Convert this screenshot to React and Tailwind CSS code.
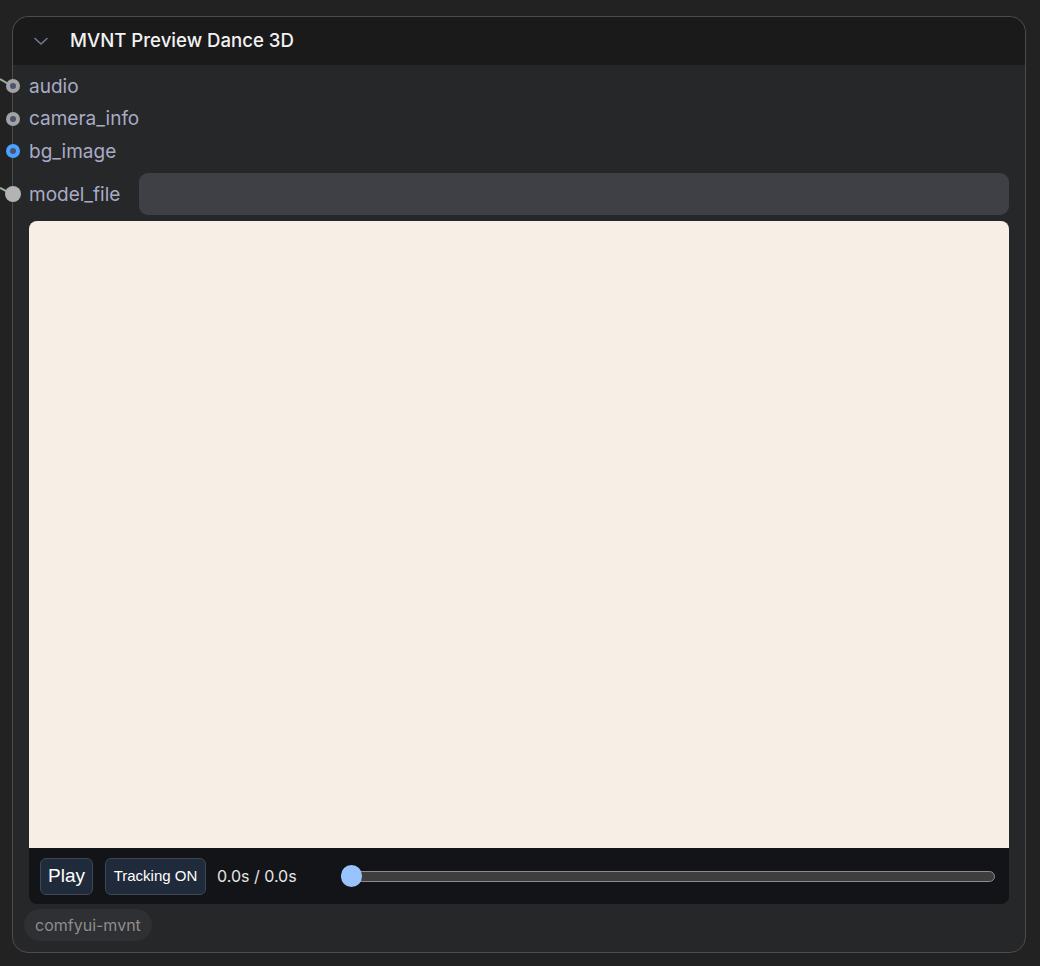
import React from "react";

function Slot({ label, h }) {
  return (
    <div className={`relative flex items-center ${h}`}>
      <span className="text-[19px] leading-none text-[#a9abc6]">{label}</span>
    </div>
  );
}

function Dot({ top, kind }) {
  if (kind === "solid") {
    return (
      <div
        className="absolute left-[-8px] h-[16px] w-[16px] rounded-full bg-[#b3b3b3]"
        style={{ top }}
      />
    );
  }
  const ring = kind === "blue" ? "bg-[#4aa3ff]" : "bg-[#a3a3a6]";
  return (
    <div
      className={`absolute left-[-7px] flex h-[14px] w-[14px] items-center justify-center rounded-full ${ring}`}
      style={{ top }}
    >
      <div className="h-[6px] w-[6px] rounded-full bg-[#4e5370]" />
    </div>
  );
}

export default function App() {
  return (
    <div
      className="min-h-[966px] w-[1040px] bg-[#222222] pt-[16px] pl-[12px]"
      style={{ fontFamily: "Inter, 'Noto Sans', sans-serif" }}
    >
      <div className="relative h-[937px] w-[1014px] rounded-[16px] border border-[#4b4c50] bg-[#262729]">
        {/* links */}
        <svg
          className="absolute left-[-13px] top-[-17px]"
          width="20"
          height="220"
          viewBox="0 0 20 220"
        >
          <path d="M0 79 L12 86" stroke="#9db09c" strokeWidth="2" fill="none" />
          <path d="M0 188 L12 194" stroke="#9db09c" strokeWidth="2" fill="none" />
        </svg>

        {/* header */}
        <div className="flex h-[48px] items-center rounded-t-[16px] bg-[#1a1a1a] pl-[20px]">
          <svg width="16" height="16" viewBox="0 0 16 16" className="mr-[21px]">
            <path
              d="M2 5.5 L8 11 L14 5.5"
              stroke="#737a98"
              strokeWidth="1.6"
              fill="none"
              strokeLinecap="round"
              strokeLinejoin="round"
            />
          </svg>
          <span className="text-[18.6px] font-medium text-[#f2f2f2]">MVNT Preview Dance 3D</span>
        </div>

        {/* dots */}
        <Dot top="62px" kind="ring" />
        <Dot top="95px" kind="ring" />
        <Dot top="127px" kind="blue" />
        <Dot top="169px" kind="solid" />

        <div className="px-[16px] pt-[5px]">
          <Slot label="audio" h="h-[32px]" />
          <Slot label="camera_info" h="h-[33px]" />
          <Slot label="bg_image" h="h-[32px]" />
          <div className="mt-[6px] flex h-[42px] items-center">
            <span className="w-[110px] text-[19px] leading-none text-[#a9abc6]">model_file</span>
            <div className="h-[42px] flex-1 rounded-[9px] bg-[#3f4045]" />
          </div>

          <div className="mt-[6px] overflow-hidden rounded-[8px]">
            <div className="h-[627px] bg-[#f7efe6]" />
            <div className="flex h-[56px] items-center bg-[#131417] pl-[11px] pr-[14px]">
              <button
                className="flex h-[37px] w-[53px] items-center justify-center rounded-[6px] border border-[#3d4758] bg-[#1f2a3b] text-[19px] text-white"
                style={{ fontFamily: "'Liberation Sans', Arial, sans-serif" }}
              >
                Play
              </button>
              <button
                className="ml-[12px] flex h-[37px] w-[101px] items-center justify-center rounded-[6px] border border-[#3d4758] bg-[#1f2a3b] text-[15px] text-white"
                style={{ fontFamily: "'Liberation Sans', Arial, sans-serif" }}
              >
                Tracking ON
              </button>
              <span className="ml-[11px] w-[124px] text-[16px] text-[#e6e6e6]">0.0s / 0.0s</span>
              <div className="relative flex h-[22px] flex-1 items-center">
                <div className="h-[11px] w-full rounded-full border border-[#8c8c8c] bg-[#3e3e3e]" />
                <div className="absolute left-0 top-0 h-[22px] w-[21px] rounded-full bg-[#99c3ff]" />
              </div>
            </div>
          </div>
        </div>

        <div className="ml-[11px] mt-[5px] inline-flex h-[32px] items-center rounded-full bg-[#2f3033] px-[11px] text-[16px] text-[#8d8d8d]">
          comfyui-mvnt
        </div>
      </div>
    </div>
  );
}
